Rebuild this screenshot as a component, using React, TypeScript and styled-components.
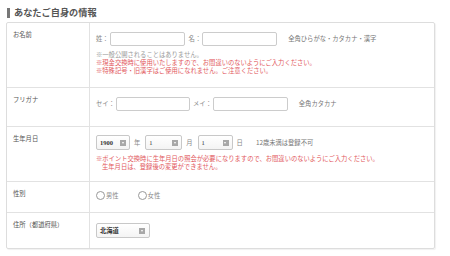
import React from "react";
import styled, { createGlobalStyle } from "styled-components";

const GlobalStyle = createGlobalStyle`
  html, body {
    margin: 0;
    padding: 0;
    background: #fff;
  }
  body {
    font-family: "Noto Sans CJK JP", "Noto Sans", sans-serif;
    color: #555;
  }
`;

const Page = styled.div`
  width: 450px;
  height: 256px;
  padding: 7px 0 0 6px;
  box-sizing: border-box;
`;

const Heading = styled.h2`
  display: flex;
  align-items: center;
  gap: 4px;
  margin: 0 0 4px 1px;
  height: 11px;
  font-size: 9.2px;
  font-weight: 700;
  color: #555;
  line-height: 11px;
  &::before {
    content: "";
    width: 3px;
    height: 10px;
    background: #777;
  }
`;

const Table = styled.div`
  width: 429px;
  border: 1px solid #ddd;
  border-radius: 2px;
  box-shadow: 1px 1px 1px rgba(0, 0, 0, 0.06);
  box-sizing: border-box;
`;

const Row = styled.div<{ $h: number }>`
  display: grid;
  grid-template-columns: 83px 1fr;
  height: ${(p) => p.$h}px;
  border-bottom: 1px solid #e2e2e2;
  box-sizing: border-box;
  &:last-child {
    border-bottom: none;
  }
`;

const Label = styled.div`
  border-right: 1px solid #e2e2e2;
  padding: 8px 0 0 6px;
  font-size: 6.3px;
  line-height: 8px;
  color: #555;
`;

const Cell = styled.div<{ $top: number }>`
  padding: ${(p) => p.$top}px 0 0 6px;
  font-size: 6.3px;
  line-height: 8px;
`;

const Line = styled.div`
  display: flex;
  align-items: center;
`;

const FieldName = styled.span<{ $gap?: number }>`
  color: #888;
  margin-left: ${(p) => p.$gap ?? 0}px;
  margin-right: 1px;
`;

const TextInput = styled.div<{ $w: number }>`
  width: ${(p) => p.$w}px;
  height: 14px;
  border: 1px solid #ccc;
  border-radius: 2px;
  background: #fff;
  box-sizing: border-box;
`;

const Hint = styled.span<{ $gap: number }>`
  color: #777;
  margin-left: ${(p) => p.$gap}px;
`;

const Notes = styled.div`
  margin-top: 5px;
`;

const Note = styled.div<{ $red?: boolean; $indent?: boolean }>`
  color: ${(p) => (p.$red ? "#e2585d" : "#999")};
  padding-left: ${(p) => (p.$indent ? "6px" : "0")};
  white-space: nowrap;
`;

const Select = styled.div<{ $w: number; $bold?: boolean }>`
  width: ${(p) => p.$w}px;
  height: 15px;
  border: 1px solid #c8c8c8;
  border-radius: 2px;
  background: linear-gradient(#fff, #f4f4f4);
  box-sizing: border-box;
  display: flex;
  align-items: center;
  justify-content: space-between;
  padding: 0 3px 0 3px;
  color: #333;
  font-weight: ${(p) => (p.$bold ? 700 : 400)};
  font-family: "Liberation Serif", "Noto Sans CJK JP", serif;
  font-size: 6.5px;
`;

const Arrow = styled.span`
  width: 6px;
  height: 6px;
  background: #a8a8a8;
  position: relative;
  &::after {
    content: "";
    position: absolute;
    left: 1.5px;
    top: 2px;
    border-left: 1.5px solid transparent;
    border-right: 1.5px solid transparent;
    border-top: 2px solid #fff;
  }
`;

const Unit = styled.span`
  color: #888;
  margin: 0 5px 0 4px;
`;

const Radio = styled.label<{ $gap?: number }>`
  display: flex;
  align-items: center;
  color: #888;
  margin-left: ${(p) => p.$gap ?? 0}px;
  &::before {
    content: "";
    width: 9px;
    height: 9px;
    border: 1px solid #999;
    border-radius: 50%;
    box-sizing: border-box;
    margin-right: 1px;
    background: #fff;
  }
`;

const PrefSelect = styled(Select)`
  font-family: "Noto Sans CJK JP", sans-serif;
  font-size: 6.3px;
  padding: 0 4px 0 3px;
`;

export default function App() {
  return (
    <Page>
      <GlobalStyle />
      <Heading>あなたご自身の情報</Heading>
      <Table>
        <Row $h={65}>
          <Label>お名前</Label>
          <Cell $top={9}>
            <Line>
              <FieldName>姓：</FieldName>
              <TextInput $w={75} />
              <FieldName $gap={4}>名：</FieldName>
              <TextInput $w={75} />
              <Hint $gap={11}>全角ひらがな・カタカナ・漢字</Hint>
            </Line>
            <Notes>
              <Note>※一般公開されることはありません。</Note>
              <Note $red>※現金交換時に使用いたしますので、お間違いのないようにご入力ください。</Note>
              <Note $red>※特殊記号・旧漢字はご使用になれません。ご注意ください。</Note>
            </Notes>
          </Cell>
        </Row>
        <Row $h={39}>
          <Label>フリガナ</Label>
          <Cell $top={9}>
            <Line>
              <FieldName>セイ：</FieldName>
              <TextInput $w={74} />
              <FieldName $gap={3}>メイ：</FieldName>
              <TextInput $w={75} />
              <Hint $gap={11}>全角カタカナ</Hint>
            </Line>
          </Cell>
        </Row>
        <Row $h={55}>
          <Label>生年月日</Label>
          <Cell $top={8}>
            <Line>
              <Select $w={34} $bold>
                1900
                <Arrow />
              </Select>
              <Unit>年</Unit>
              <Select $w={37}>
                1
                <Arrow />
              </Select>
              <Unit>月</Unit>
              <Select $w={35}>
                1
                <Arrow />
              </Select>
              <Unit>日</Unit>
              <Hint $gap={8}>12歳未満は登録不可</Hint>
            </Line>
            <Notes>
              <Note $red>※ポイント交換時に生年月日の照会が必要になりますので、お間違いのないようにご入力ください。</Note>
              <Note $red $indent>生年月日は、登録後の変更ができません。</Note>
            </Notes>
          </Cell>
        </Row>
        <Row $h={31}>
          <Label>性別</Label>
          <Cell $top={9}>
            <Line>
              <Radio>男性</Radio>
              <Radio $gap={19}>女性</Radio>
            </Line>
          </Cell>
        </Row>
        <Row $h={35}>
          <Label>住所（都道府県）</Label>
          <Cell $top={10}>
            <Line>
              <PrefSelect $w={54} $bold>
                北海道
                <Arrow />
              </PrefSelect>
            </Line>
          </Cell>
        </Row>
      </Table>
    </Page>
  );
}
